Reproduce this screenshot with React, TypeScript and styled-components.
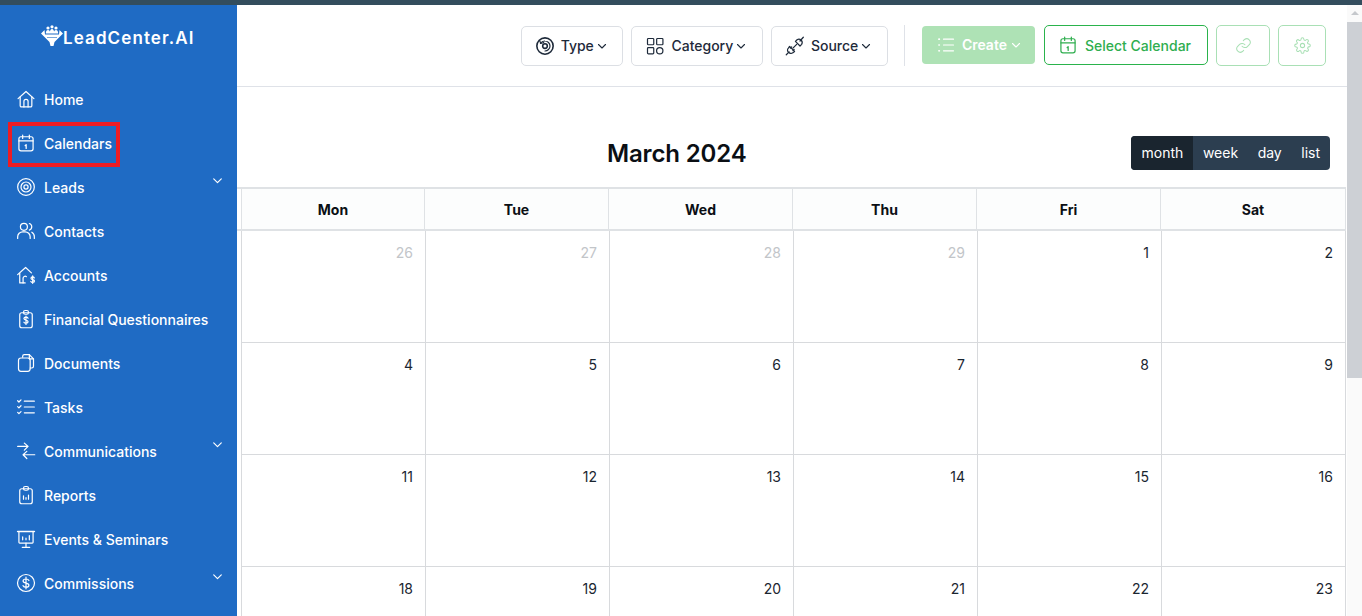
import React from "react";
import styled, { createGlobalStyle } from "styled-components";

const GlobalStyle = createGlobalStyle`
  html, body {
    margin: 0;
    padding: 0;
    height: 100%;
    overflow: hidden;
    background: #fff;
    font-family: Inter, "Liberation Sans", sans-serif;
  }
`;

type IconProps = { size?: number; children: React.ReactNode };

const Icon = ({ size = 20, children }: IconProps) => (
  <svg
    width={size}
    height={size}
    viewBox="0 0 24 24"
    fill="none"
    stroke="currentColor"
    strokeWidth="1.45"
    strokeLinecap="round"
    strokeLinejoin="round"
  >
    {children}
  </svg>
);

const HomeIcon = () => (
  <Icon>
    <path d="M2.5 11.5 12 3l9.5 8.5" />
    <path d="M5 9.5V20a1.5 1.5 0 0 0 1.500 1.500h11A1.500 1.500 0 0 0 19 20V9.500" />
    <path d="M9.500 21.500V15a2.500 2.500 0 0 1 5 0v6.500" />
  </Icon>
);

const CalendarIcon = ({ size = 20 }: { size?: number }) => (
  <Icon size={size}>
    <rect x="3.500" y="4.500" width="17" height="17" rx="2.500" />
    <path d="M3.500 9.500h17M8 2.500v4M16 2.500v4" />
    <path d="M11 15l1.200-1v4.500" strokeWidth="1.500" />
  </Icon>
);

const TargetIcon = () => (
  <Icon>
    <circle cx="12" cy="12" r="10" />
    <circle cx="12" cy="12" r="6" />
    <circle cx="12" cy="12" r="2.500" />
  </Icon>
);

const ContactsIcon = () => (
  <Icon>
    <circle cx="9.500" cy="7" r="4.200" />
    <path d="M2 21v-2a6 6 0 0 1 6-6h3a6 6 0 0 1 6 6v2" />
    <path d="M16 3a4.200 4.200 0 0 1 0 8M19 13.500a6 6 0 0 1 3 5.500v2" />
  </Icon>
);

const AccountsIcon = () => (
  <Icon>
    <path d="M2 11.500 11.500 3l7 6.500" />
    <path d="M4.500 10v11.500h6.500" />
    <path d="M8.500 21.500V16a2.500 2.500 0 0 1 4-2" />
    <path d="M22 15.500c-.4-.8-1.100-1.200-2-1.200-1.200 0-2 .6-2 1.500 0 2.200 4.200 1.200 4.200 3.500 0 1-.9 1.600-2.200 1.600-1 0-1.800-.4-2.200-1.200M20 13v9" />
  </Icon>
);

const QuestionnaireIcon = () => (
  <Icon>
    <rect x="4.500" y="4.500" width="15" height="18" rx="2.500" />
    <rect x="9" y="1.800" width="6" height="4.500" rx="2" />
    <path d="M14.500 11c-.4-.8-1.300-1.200-2.500-1.200-1.400 0-2.500.7-2.500 1.700 0 2.500 5 1.200 5 3.800 0 1-1.100 1.700-2.500 1.700-1.200 0-2.100-.4-2.500-1.200M12 8.500v10" />
  </Icon>
);

const DocumentsIcon = () => (
  <Icon>
    <path d="M8 5V4a2 2 0 0 1 2-2h6l5 5v9a2 2 0 0 1-2 2h-2" />
    <rect x="3" y="6" width="14" height="16" rx="3" />
    <path d="M16 2v5h5" />
  </Icon>
);

const TasksIcon = () => (
  <Icon>
    <path d="M2 4.500l1.500 1.500L6 3.500M2 11.500 3.500 13 6 10.500M2 18.500 3.500 20 6 17.500" />
    <path d="M10 5h12M10 12h12M10 19h12" />
  </Icon>
);

const CommunicationsIcon = () => (
  <Icon>
    <path d="M2 6.500h12M10 2.500l4.500 4-4.500 4.500" />
    <path d="M22.500 16.500H9M13 12.500l-4.500 4 4.500 4.500" />
  </Icon>
);

const ReportsIcon = () => (
  <Icon>
    <rect x="4.500" y="4.500" width="15" height="18" rx="2.500" />
    <rect x="9" y="1.800" width="6" height="4.500" rx="2" />
    <path d="M9 17v-4M12 17v-2M15 17v-5" />
  </Icon>
);

const EventsIcon = () => (
  <Icon>
    <path d="M2 3h20" strokeWidth="2" />
    <path d="M3.500 3v13a1 1 0 0 0 1 1h15a1 1 0 0 0 1-1V3" />
    <path d="M12 17v4.500M7.500 22h9M8 13V9.500M12 13v-2M16 13V8" />
  </Icon>
);

const DollarIcon = () => (
  <Icon>
    <circle cx="12" cy="12" r="10.200" />
    <path d="M15.500 9c-.5-1.100-1.800-1.800-3.500-1.800-2 0-3.500 1-3.500 2.400 0 3.400 7 1.800 7 5 0 1.400-1.500 2.400-3.500 2.400-1.700 0-3-.7-3.500-1.800M12 5v14" />
  </Icon>
);

const Chevron = ({ size = 12 }: { size?: number }) => (
  <svg width={size} height={size} viewBox="0 0 12 12" fill="none" stroke="currentColor" strokeWidth="1.100" strokeLinecap="round" strokeLinejoin="round">
    <path d="M2.500 4.500 6 8l3.500-3.500" />
  </svg>
);

const TypeIcon = () => (
  <Icon>
    <circle cx="12" cy="12" r="9.800" strokeWidth="1.900" />
    <path d="M6.500 9A6.200 6.200 0 0 1 12 6c3.200 0 6 2.700 6 6s-2.800 6-6 6" strokeWidth="1.400" />
    <circle cx="12" cy="12" r="2.800" strokeWidth="1.900" />
    <path d="M5.500 5.500 7 9l3.500-1.200" strokeWidth="1.400" />
  </Icon>
);

const CategoryIcon = () => (
  <Icon>
    <rect x="3" y="3" width="7.500" height="7.500" rx="1" />
    <rect x="14" y="3" width="7.500" height="7.500" rx="1" />
    <rect x="3" y="14" width="7.500" height="7.500" rx="1" />
    <circle cx="17.700" cy="17.700" r="3.800" />
  </Icon>
);

const SourceIcon = () => (
  <Icon>
    <path d="M1.500 22.500 5 19" />
    <path d="M5.500 12.500l6 6-2 1.500a3.500 3.500 0 0 1-5-.2 3.500 3.500 0 0 1-.5-5.300z" />
    <path d="M11 16l-1.500 1.500M8 13l-1.500 1.500" />
    <path d="M9.500 14.500 14 10" />
    <path d="M12.500 6.500l5.500 5.500 2-2a4 4 0 0 0-5.500-5.500z" />
    <path d="M18 6l4-4.500" />
  </Icon>
);

const ListIcon = () => (
  <Icon>
    <path d="M9 5h12M9 12h12M9 19h12" />
    <path d="M3.500 5h.5M3.500 12h.5M3.500 19h.5" strokeWidth="2" />
  </Icon>
);

const LinkIcon = () => (
  <Icon>
    <path d="M10 13a5 5 0 0 0 7.500.5l3-3a5 5 0 0 0-7-7l-1.700 1.700" />
    <path d="M14 11a5 5 0 0 0-7.500-.5l-3 3a5 5 0 0 0 7 7l1.700-1.700" />
  </Icon>
);

const GearIcon = () => (
  <Icon>
    <circle cx="12" cy="12" r="3" />
    <path d="M19.400 15a1.650 1.650 0 0 0 .33 1.820l.06.06a2 2 0 1 1-2.830 2.830l-.06-.06a1.650 1.650 0 0 0-2.900 1.170V21a2 2 0 0 1-4 0v-.09a1.650 1.650 0 0 0-2.900-1.110l-.06.06a2 2 0 1 1-2.830-2.830l.06-.06a1.650 1.650 0 0 0-1.170-2.900H3a2 2 0 0 1 0-4h.09A1.650 1.650 0 0 0 4.200 7.170l-.06-.06a2 2 0 1 1 2.830-2.830l.06.06a1.650 1.650 0 0 0 2.900-1.170V3a2 2 0 0 1 4 0v.09a1.650 1.650 0 0 0 2.900 1.110l.06-.06a2 2 0 1 1 2.830 2.830l-.06.06a1.650 1.650 0 0 0 1.170 2.900H21a2 2 0 0 1 0 4h-.09a1.650 1.650 0 0 0-1.510 1.070z" />
  </Icon>
);

const LogoMark = () => (
  <svg width="22" height="22" viewBox="0 0 22 22" fill="#fff">
    <circle cx="7" cy="3" r="1.600" />
    <circle cx="11" cy="1.800" r="1.600" />
    <circle cx="15" cy="3" r="1.600" />
    <path d="M4.800 8.500c0-2.500 1-3.500 2.200-3.500s2.200 1 2.200 3.500zM8.800 8.500c0-3.500 1-4.500 2.200-4.500s2.200 1 2.200 4.500zM12.800 8.500c0-2.500 1-3.500 2.200-3.500s2.200 1 2.200 3.500z" />
    <path d="M0 8.500 3.500 5l.5 4.500h14l.5-4.500L22 8.500 13.500 17l-1 4h-3l-1-4z" />
    <path d="M6 12.500h10" stroke="#1f6bc4" strokeWidth="0.600" />
  </svg>
);

const navItems = [
  { label: "Home", icon: <HomeIcon /> },
  { label: "Calendars", icon: <CalendarIcon />, marked: true },
  { label: "Leads", icon: <TargetIcon />, expandable: true },
  { label: "Contacts", icon: <ContactsIcon /> },
  { label: "Accounts", icon: <AccountsIcon /> },
  { label: "Financial Questionnaires", icon: <QuestionnaireIcon /> },
  { label: "Documents", icon: <DocumentsIcon /> },
  { label: "Tasks", icon: <TasksIcon /> },
  { label: "Communications", icon: <CommunicationsIcon />, expandable: true },
  { label: "Reports", icon: <ReportsIcon /> },
  { label: "Events & Seminars", icon: <EventsIcon /> },
  { label: "Commissions", icon: <DollarIcon />, expandable: true },
];

const weekDays = ["Mon", "Tue", "Wed", "Thu", "Fri", "Sat"];

const weeks = [
  [26, 27, 28, 29, 1, 2],
  [4, 5, 6, 7, 8, 9],
  [11, 12, 13, 14, 15, 16],
  [18, 19, 20, 21, 22, 23],
];

const App = () => {
  return (
    <Page>
      <GlobalStyle />
      <TopStrip />
      <Body>
        <Sidebar>
          <Logo>
            <LogoMark />
            <LogoText>LeadCenter.AI</LogoText>
          </Logo>
          <Nav>
            {navItems.map((item) => (
              <NavItem key={item.label} $marked={item.marked}>
                <NavIcon>{item.icon}</NavIcon>
                <NavLabel>{item.label}</NavLabel>
                {item.expandable && (
                  <NavChevron>
                    <Chevron size={13} />
                  </NavChevron>
                )}
              </NavItem>
            ))}
          </Nav>
        </Sidebar>
        <Main>
          <Header>
            <FilterButton>
              <TypeIcon />
              <FilterLabel>
                Type
                <Chevron />
              </FilterLabel>
            </FilterButton>
            <FilterButton>
              <CategoryIcon />
              <FilterLabel>
                Category
                <Chevron />
              </FilterLabel>
            </FilterButton>
            <FilterButton>
              <SourceIcon />
              <FilterLabel>
                Source
                <Chevron />
              </FilterLabel>
            </FilterButton>
            <Divider />
            <CreateButton>
              <ListIcon />
              <CreateLabel>
                Create
                <Chevron />
              </CreateLabel>
            </CreateButton>
            <SelectButton>
              <CalendarIcon />
              Select Calendar
            </SelectButton>
            <GhostButton $width={54}>
              <LinkIcon />
            </GhostButton>
            <GhostButton $width={48}>
              <GearIcon />
            </GhostButton>
          </Header>
          <Toolbar>
            <Title>March 2024</Title>
            <ViewGroup>
              <ViewButton $active>month</ViewButton>
              <ViewButton>week</ViewButton>
              <ViewButton>day</ViewButton>
              <ViewButton>list</ViewButton>
            </ViewGroup>
          </Toolbar>
          <CalendarHead>
            {weekDays.map((day) => (
              <HeadCell key={day}>{day}</HeadCell>
            ))}
          </CalendarHead>
          <CalendarBody>
            {weeks.flat().map((date, index) => (
              <DayCell key={index}>
                <DayNumber $muted={index < 4}>{date}</DayNumber>
              </DayCell>
            ))}
          </CalendarBody>
        </Main>
        <ScrollTrack>
          <ScrollArrow />
          <ScrollThumb />
        </ScrollTrack>
      </Body>
    </Page>
  );
};

export default App;

const Page = styled.div`
  display: flex;
  flex-direction: column;
  height: 100vh;
  overflow: hidden;
`;

const TopStrip = styled.div`
  flex: none;
  height: 5px;
  background-color: #334d5d;
`;

const Body = styled.div`
  display: flex;
  flex: 1;
  min-height: 0;
`;

const Sidebar = styled.aside`
  flex: none;
  width: 237px;
  background-color: #1f6bc4;
  color: #fff;
  overflow: hidden;
`;

const Logo = styled.div`
  display: flex;
  align-items: center;
  height: 72px;
  padding: 0 0 11px 41px;
  box-sizing: border-box;
`;

const LogoText = styled.span`
  font-family: Inter, sans-serif;
  font-size: 17px;
  font-weight: 600;
  letter-spacing: 1.1px;
  margin-top: 5px;
`;

const Nav = styled.nav`
  display: flex;
  flex-direction: column;
`;

const NavItem = styled.div<{ $marked?: boolean }>`
  position: relative;
  display: flex;
  align-items: center;
  height: 44px;
  padding-left: 16px;
  gap: 8px;

  ${(p) =>
    p.$marked &&
    `&::after {
      content: "";
      position: absolute;
      left: 8px;
      top: 1px;
      width: 112px;
      height: 45px;
      box-sizing: border-box;
      border: 4px solid #ed1c24;
    }`}
`;

const NavIcon = styled.span`
  display: flex;
  width: 20px;
  justify-content: center;
`;

const NavLabel = styled.span`
  font-size: 14px;
  font-weight: 500;
`;

const NavChevron = styled.span`
  display: flex;
  position: absolute;
  right: 13px;
  top: 9px;
`;

const Main = styled.main`
  flex: 1;
  min-width: 0;
  display: flex;
  flex-direction: column;
`;

const Header = styled.header`
  flex: none;
  display: flex;
  align-items: center;
  justify-content: flex-end;
  height: 81px;
  padding: 0 21px 0 0;
  box-sizing: content-box;
  border-bottom: 1px solid #dfe2e8;
`;

const FilterButton = styled.button`
  display: flex;
  align-items: center;
  gap: 6px;
  height: 40px;
  margin-left: 8px;
  padding: 0 14.6px 0 13px;
  box-sizing: border-box;
  background: #fff;
  border: 1px solid #dcdfe4;
  border-radius: 5px;
  color: #1e2a3a;
  font-family: inherit;
  font-size: 14px;
  font-weight: 500;
`;

const FilterLabel = styled.span`
  display: flex;
  align-items: center;
  gap: 2px;
`;

const Divider = styled.div`
  width: 1px;
  height: 41px;
  margin: 0 17px 0 16px;
  background-color: #dfe2e8;
`;

const CreateButton = styled.button`
  display: flex;
  align-items: center;
  gap: 6px;
  height: 38px;
  margin: 0 9px 2px 0;
  padding: 0 13px 0 14px;
  box-sizing: border-box;
  background-color: #aee2b5;
  border: 0;
  border-radius: 4px;
  color: #fff;
  font-family: inherit;
  font-size: 14px;
  font-weight: 600;
`;

const CreateLabel = styled.span`
  display: flex;
  align-items: center;
  gap: 3px;
`;

const SelectButton = styled.button`
  display: flex;
  align-items: center;
  gap: 7px;
  height: 40px;
  margin: 0 8px 1px 0;
  padding: 0 16px 0 13px;
  box-sizing: border-box;
  background: #fff;
  border: 1px solid #2ab34c;
  border-radius: 5px;
  color: #2fae4f;
  font-family: inherit;
  font-size: 14px;
  font-weight: 500;
`;

const GhostButton = styled.button<{ $width: number }>`
  display: flex;
  align-items: center;
  justify-content: center;
  width: ${(p) => p.$width}px;
  height: 41px;
  margin-right: ${(p) => (p.$width === 54 ? 8 : 0)}px;
  padding: 0;
  background: #fff;
  border: 1px solid #a9e0b5;
  border-radius: 5px;
  color: #a9e0b5;
  > svg {
    width: 17px;
    height: 17px;
  }
`;

const Toolbar = styled.div`
  flex: none;
  display: flex;
  align-items: center;
  justify-content: space-between;
  height: 34px;
  margin-top: 49px;
  padding: 0 17px 0 370px;
`;

const Title = styled.h2`
  margin: 0;
  font-size: 24px;
  font-weight: 600;
  letter-spacing: -0.15px;
  color: #0b0f14;
`;

const ViewGroup = styled.div`
  display: flex;
  height: 34px;
  border-radius: 4px;
  overflow: hidden;
  background-color: #2c3e50;
`;

const ViewButton = styled.div<{ $active?: boolean }>`
  display: flex;
  align-items: center;
  padding: 0 9.75px 1px;
  background-color: ${(p) => (p.$active ? "#1a252f" : "transparent")};
  color: #fff;
  font-size: 14px;

  &:first-child {
    padding-left: 11px;
  }

  &:last-child {
    padding-right: 10px;
  }
`;

const CalendarHead = styled.div`
  flex: none;
  display: grid;
  grid-template-columns: repeat(5, 184px) 185px;
  height: 40px;
  margin: 17px 1px 0 0;
  padding-left: 4px;
  border-top: 2px solid #dfe2e5;
  border-bottom: 2px solid #dfe2e5;
`;

const HeadCell = styled.div`
  display: flex;
  align-items: center;
  justify-content: center;
  box-sizing: border-box;
  background-color: #fcfdfd;
  border-right: 1px solid #dfe2e5;
  color: #0b0f14;
  font-size: 14px;
  font-weight: 700;

  &:first-child {
    border-left: 1px solid #dfe2e5;
  }
`;

const CalendarBody = styled.div`
  display: grid;
  grid-template-columns: repeat(6, 184px);
  grid-auto-rows: 112px;
  margin-left: 4px;
  border-left: 1px solid #d8dadd;
`;

const DayCell = styled.div`
  box-sizing: border-box;
  padding: 11px 12px 0 0;
  border-right: 1px solid #d8dadd;
  border-bottom: 1px solid #d8dadd;
  text-align: right;
`;

const DayNumber = styled.span<{ $muted?: boolean }>`
  color: ${(p) => (p.$muted ? "#c2c5c9" : "#1a2530")};
  font-size: 14px;
`;

const ScrollTrack = styled.div`
  flex: none;
  display: flex;
  flex-direction: column;
  align-items: center;
  width: 15px;
  background-color: #fafafa;
`;

const ScrollArrow = styled.div`
  flex: none;
  width: 0;
  height: 0;
  margin: 6px 0 7px;
  border-left: 4px solid transparent;
  border-right: 4px solid transparent;
  border-bottom: 4px solid #c5c8cc;
`;

const ScrollThumb = styled.div`
  flex: none;
  align-self: stretch;
  height: 356px;
  background-color: #cdd0d5;
`;
